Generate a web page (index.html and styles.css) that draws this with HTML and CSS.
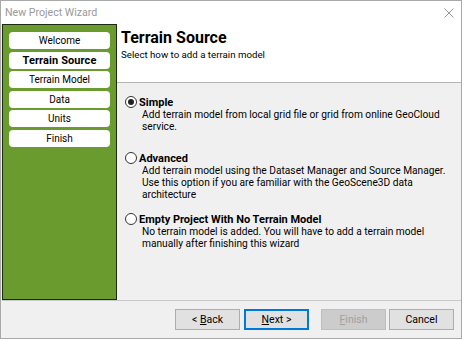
FILE: index.html
```html
<!DOCTYPE html>
<html lang="en">
<head>
    <meta charset="UTF-8">
    <title>New Project Wizard</title>
    <link rel="stylesheet" href="styles.css">
</head>
<body>
    <div class="window">
        <div class="titlebar">
            <span class="title">New Project Wizard</span>
            <svg class="close" width="10" height="10" viewBox="0 0 10 10">
                <path d="M0.5 0.5 L9.5 9.5 M9.5 0.5 L0.5 9.5" stroke="#999" stroke-width="1" fill="none"/>
            </svg>
        </div>
        <div class="main">
            <div class="steps">
                <div class="step">Welcome</div>
                <div class="step current">Terrain Source</div>
                <div class="step">Terrain Model</div>
                <div class="step">Data</div>
                <div class="step">Units</div>
                <div class="step">Finish</div>
            </div>
            <div class="page">
                <div class="page-header">
                    <h1>Terrain Source</h1>
                    <p>Select how to add a terrain model</p>
                </div>
                <div class="page-body">
                    <div class="option opt-simple">
                        <div class="opt-head"><span class="radio checked"></span>Simple</div>
                        <p class="opt-desc">Add terrain model from local grid file or grid from online GeoCloud<br>service.</p>
                    </div>
                    <div class="option opt-advanced">
                        <div class="opt-head"><span class="radio"></span>Advanced</div>
                        <p class="opt-desc">Add terrain model using the Dataset Manager and Source Manager.<br>Use this option if you are familiar with the GeoScene3D data<br>architecture</p>
                    </div>
                    <div class="option">
                        <div class="opt-head"><span class="radio"></span>Empty Project With No Terrain Model</div>
                        <p class="opt-desc">No terrain model is added. You will have to add a terrain model<br>manually after finishing this wizard</p>
                    </div>
                </div>
            </div>
        </div>
        <div class="footer">
            <button class="btn">&lt; <u>B</u>ack</button>
            <button class="btn focused"><u>N</u>ext &gt;</button>
            <button class="btn disabled gap-left"><u>F</u>inish</button>
            <button class="btn">Cancel</button>
        </div>
    </div>
</body>
</html>
```

FILE: styles.css
```css
html, body {
    margin: 0;
    padding: 0;
}
* {
    box-sizing: border-box;
}
body {
    background: #fff;
    font-family: Roboto, "Noto Sans", sans-serif;
    font-size: 10.2px;
    color: #000;
}
.window {
    width: 462px;
    height: 339px;
    border: 1px solid #a8a8a8;
    background: #f0f0f0;
    display: flex;
    flex-direction: column;
    padding-left: 1px;
}
.titlebar {
    height: 23px;
    background: #fff;
    display: flex;
    align-items: center;
    justify-content: space-between;
    padding: 0 7px 0 4px;
    margin-left: -1px;
}
.title {
    font-size: 10.6px;
    color: #999;
}
.close {
    display: block;
}
.main {
    display: flex;
    height: 276px;
}
.steps {
    width: 115px;
    background: #699b2f;
    border: 1px solid #1e2a10;
    padding: 7px 6px 0 6px;
    display: flex;
    flex-direction: column;
    gap: 2.6px;
}
.step {
    height: 17px;
    background: #fff;
    border-radius: 4px;
    font-size: 10px;
    line-height: 17px;
    text-align: center;
}
.step.current {
    font-weight: bold;
    font-size: 11px;
    letter-spacing: 0.1px;
}
.page {
    flex: 1;
    display: flex;
    flex-direction: column;
}
.page-header {
    height: 59px;
    background: #fff;
    border-bottom: 1px solid #b4b4b4;
    padding: 4px 4px 0 4px;
}
.page-header h1 {
    margin: 0;
    font-size: 16px;
    line-height: 20px;
    font-weight: bold;
}
.page-header p {
    margin: 0;
    font-size: 9.7px;
    line-height: 14px;
}
.page-body {
    flex: 1;
    padding: 13px 0 0 8px;
}
.option {
    margin: 0;
}
.opt-simple {
    height: 56px;
}
.opt-advanced {
    height: 61px;
}
.opt-head {
    display: flex;
    align-items: center;
    gap: 2px;
    height: 12px;
    font-weight: bold;
    font-size: 11px;
}
.radio {
    width: 12px;
    height: 12px;
    border: 1px solid #333;
    border-radius: 50%;
    background: #fff;
    display: flex;
    align-items: center;
    justify-content: center;
}
.radio.checked::after {
    content: "";
    width: 6px;
    height: 6px;
    border-radius: 50%;
    background: #222;
}
.opt-desc {
    margin: 1px 0 0 17px;
    line-height: 12px;
}
.footer {
    flex: 1;
    border-top: 1px solid #c8c8c8;
    display: flex;
    justify-content: flex-end;
    align-items: flex-start;
    padding: 8px 7px 0 0;
    gap: 4px;
}
.btn {
    width: 65px;
    height: 21px;
    font-family: inherit;
    font-size: 10.5px;
    background: #e1e1e1;
    border: 1px solid #adadad;
    color: #000;
    padding: 0;
}
.btn.focused {
    border: 2px solid #0078d7;
}
.btn.disabled {
    background: #cccccc;
    border-color: #bfbfbf;
    color: #a0a0a0;
}
.gap-left {
    margin-left: 8px;
}
.btn:last-child {
    margin-left: -1px;
}
```
